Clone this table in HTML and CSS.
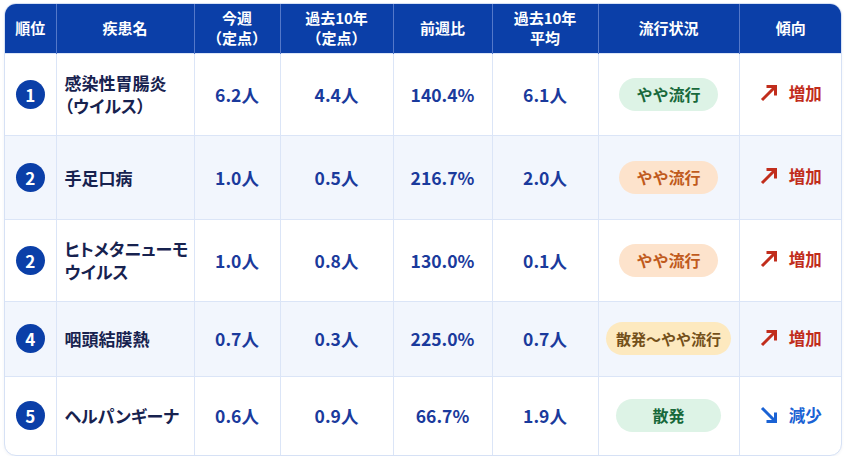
FILE: index.html
```html
<!DOCTYPE html>
<html lang="ja">
<head>
<meta charset="utf-8">
<title>感染症ランキング</title>
<link rel="stylesheet" href="styles.css">
</head>
<body>
<div class="card">
  <table class="ranking">
    <colgroup>
      <col class="c-rank"><col class="c-name"><col class="c-now"><col class="c-past">
      <col class="c-ratio"><col class="c-avg"><col class="c-status"><col class="c-trend">
    </colgroup>
    <thead>
      <tr>
        <th>順位</th>
        <th>疾患名</th>
        <th>今週<br>（定点）</th>
        <th>過去10年<br>（定点）</th>
        <th>前週比</th>
        <th>過去10年<br>平均</th>
        <th>流行状況</th>
        <th>傾向</th>
      </tr>
    </thead>
    <tbody>
      <tr>
        <td><span class="rank">1</span></td>
        <td class="name">感染性胃腸炎<br>（ウイルス）</td>
        <td class="num">6.2人</td>
        <td class="num">4.4人</td>
        <td class="num">140.4%</td>
        <td class="num">6.1人</td>
        <td><span class="badge green">やや流行</span></td>
        <td><span class="trend up"><svg viewBox="0 0 18 18" width="18" height="18"><path d="M2 16 L15.5 2.5 M6.5 2.5 H15.5 V11.5"/></svg>増加</span></td>
      </tr>
      <tr>
        <td><span class="rank">2</span></td>
        <td class="name">手足口病</td>
        <td class="num">1.0人</td>
        <td class="num">0.5人</td>
        <td class="num">216.7%</td>
        <td class="num">2.0人</td>
        <td><span class="badge orange">やや流行</span></td>
        <td><span class="trend up"><svg viewBox="0 0 18 18" width="18" height="18"><path d="M2 16 L15.5 2.5 M6.5 2.5 H15.5 V11.5"/></svg>増加</span></td>
      </tr>
      <tr>
        <td><span class="rank">2</span></td>
        <td class="name">ヒトメタニューモ<br>ウイルス</td>
        <td class="num">1.0人</td>
        <td class="num">0.8人</td>
        <td class="num">130.0%</td>
        <td class="num">0.1人</td>
        <td><span class="badge orange">やや流行</span></td>
        <td><span class="trend up"><svg viewBox="0 0 18 18" width="18" height="18"><path d="M2 16 L15.5 2.5 M6.5 2.5 H15.5 V11.5"/></svg>増加</span></td>
      </tr>
      <tr>
        <td><span class="rank">4</span></td>
        <td class="name">咽頭結膜熱</td>
        <td class="num">0.7人</td>
        <td class="num">0.3人</td>
        <td class="num">225.0%</td>
        <td class="num">0.7人</td>
        <td><span class="badge yellow">散発～やや流行</span></td>
        <td><span class="trend up"><svg viewBox="0 0 18 18" width="18" height="18"><path d="M2 16 L15.5 2.5 M6.5 2.5 H15.5 V11.5"/></svg>増加</span></td>
      </tr>
      <tr>
        <td><span class="rank">5</span></td>
        <td class="name">ヘルパンギーナ</td>
        <td class="num">0.6人</td>
        <td class="num">0.9人</td>
        <td class="num">66.7%</td>
        <td class="num">1.9人</td>
        <td><span class="badge green wide">散発</span></td>
        <td><span class="trend down"><svg viewBox="0 0 18 18" width="18" height="18"><path d="M2 2 L15.5 15.5 M15.5 6.5 V15.5 H6.5"/></svg>減少</span></td>
      </tr>
    </tbody>
  </table>
</div>
</body>
</html>
```

FILE: styles.css
```css
* { box-sizing: border-box; }
html, body { margin: 0; padding: 0; background: #ffffff; }
body {
  font-family: "Noto Sans CJK JP", "Noto Sans", sans-serif;
  padding: 3px 0 0 4px;
}
.card {
  width: 838px;
  border: 1px solid #d6e1f5;
  border-radius: 12px;
  overflow: hidden;
  background: #ffffff;
  box-shadow: 0 1px 3px rgba(20, 50, 120, 0.06);
}
.ranking {
  width: 100%;
  border-collapse: collapse;
  table-layout: fixed;
}
.c-rank { width: 51px; }
.c-name { width: 138px; }
.c-now { width: 86px; }
.c-past { width: 113px; }
.c-ratio { width: 99px; }
.c-avg { width: 106px; }
.c-status { width: 141px; }
.c-trend { width: 103px; }

.ranking th {
  background: #0b3fa8;
  color: #ffffff;
  font-size: 15px;
  font-weight: 700;
  line-height: 20px;
  height: 49px;
  padding: 0;
  text-align: center;
  vertical-align: middle;
  border-left: 1px solid #5478c9;
}
.ranking th:first-child { border-left: none; }

.ranking td {
  padding: 0;
  text-align: center;
  vertical-align: middle;
  border-left: 1px solid #dbe5f7;
  border-top: 1px solid #dbe5f7;
}
.ranking td:first-child { border-left: none; }
.ranking tbody tr:nth-child(even) td { background: #f2f6fd; }
.ranking tbody tr:nth-child(1) { height: 82px; }
.ranking tbody tr:nth-child(2) { height: 84px; }
.ranking tbody tr:nth-child(3) { height: 82px; }
.ranking tbody tr:nth-child(4) { height: 75px; }
.ranking tbody tr:nth-child(5) { height: 79px; }

.rank {
  display: inline-flex;
  align-items: center;
  justify-content: center;
  width: 29px;
  height: 29px;
  border-radius: 50%;
  background: #0b3fa8;
  color: #ffffff;
  font-size: 17px;
  font-weight: 700;
  line-height: 1;
}
.ranking td.name {
  text-align: left;
  padding-left: 8px;
  padding-right: 0;
  font-size: 17px;
  font-weight: 700;
  line-height: 23px;
  color: #17224f;
  font-feature-settings: "palt";
  white-space: nowrap;
}
.ranking td.num {
  font-size: 17.5px;
  font-weight: 700;
  color: #1a3a9c;
}
.badge {
  display: inline-block;
  min-width: 99px;
  padding: 0 16px;
  height: 33px;
  line-height: 33px;
  border-radius: 17px;
  font-size: 16px;
  font-weight: 700;
}
.badge.wide { min-width: 105px; }
.badge.green { background: #ddf3e6; color: #18693b; }
.badge.orange { background: #fde3cc; color: #c05a1c; }
.badge.yellow {
  background: #fde9bf;
  color: #74501a;
  font-size: 15px;
  padding: 0 10px;
}
.trend {
  display: inline-flex;
  align-items: center;
  gap: 11px;
  font-size: 16.5px;
  font-weight: 700;
}
.trend svg {
  fill: none;
  stroke: currentColor;
  stroke-width: 3;
  stroke-linecap: butt;
}
.trend.up { color: #c12d1c; }
.trend.down { color: #1a62d4; }
```
